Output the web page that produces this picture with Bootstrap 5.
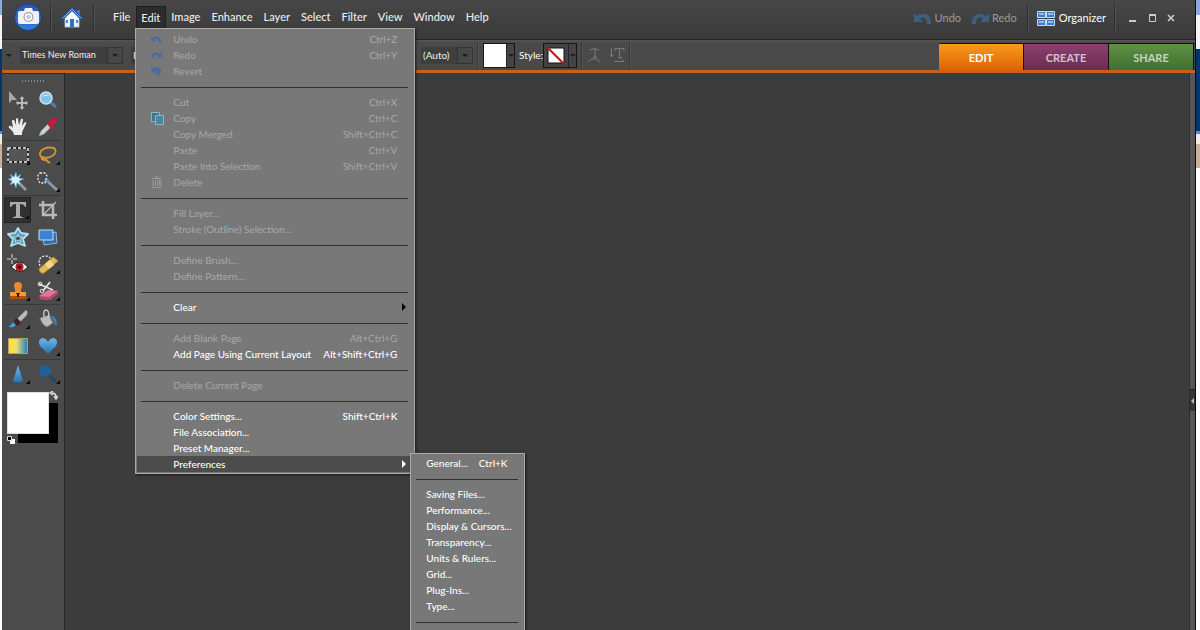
<!DOCTYPE html>
<html lang="en">
<head>
<meta charset="utf-8">
<meta name="viewport" content="width=device-width, initial-scale=1">
<title>Photo editor</title>
<link href="https://cdn.jsdelivr.net/npm/bootstrap@5.3.0/dist/css/bootstrap.min.css" rel="stylesheet">
<style>
  body {
    font-family: Lato, "Open Sans", sans-serif;
    font-size: 11px; line-height: 16px; color: #e6e6e6;
    background: linear-gradient(#8da9e0 0 15px, #f4f4f4 15px 49px, #003670 49px 131px, #5d86e8 131px 134px, #f3ece3 134px 144px, #c9b19c 144px 168px, #fff 168px);
  }
  button, select { font: inherit; color: inherit; border: 0; padding: 0; background: none; }
  svg { display: block; flex: none; }
  .app { margin: 0 4px 0 2px; border-right: 1px solid #0c0c0c; background: #3c3c3c; }

  .topbar { height: 40px; background: linear-gradient(#474747, #3a3a3a); border-bottom: 1px solid #262626; }
  .topbar .vline { width: 2px; height: 28px; background: #303030; border-right: 1px solid #505050; }
  .mainmenu { padding: 6px 0 0 13px; }
  .menu-btn { padding: 0 6px 0 5px; height: 22px; font-size: 11px; font-weight: 500; color: #ececec; }
  .menu-btn.active { background: #2c2c2c; border: 1px solid #1f1f1f; border-bottom: 0; padding: 0 5px 0 4px; }
  .brand-icon { width: 48px; padding-left: 11px; }
  .home-icon { width: 41px; padding-left: 9px; }
  .hist-btn { color: #9c9c9c; gap: 3px; margin-right: 10px; }
  .win-btns { margin: 0 17px 0 10px; gap: 5px; }

  .optbar { height: 30px; background: linear-gradient(#555, #4a4a4a 3px, #484848); font-size: 10px; }
  .optbar .vline { width: 2px; height: 26px; background: #383838; border-right: 1px solid #555; }
  .field select { appearance: none; background: #3e3e3e; height: 17px; padding-left: 2px; color: #f0f0f0; border-radius: 0; }
  .drop { width: 16px; height: 17px; background: #474747; border: 1px solid #333; display: flex; align-items: center; justify-content: center; }
  .caret { width: 0; height: 0; border: 3px solid transparent; border-top-color: #1d1d1d; border-bottom: 0; }
  .pick { height: 25px; border: 1px solid #161616; background: #444; }
  .pick .side { width: 8px; height: 23px; display: flex; align-items: center; justify-content: center; }
  .field .font-select { width: 87px; font-size: 9px; }
  .style-select { width: 250px; }
  .leading-select { width: 36px; }

  .mode { height: 27px; width: 85px; border: 1px solid #111; border-bottom: 0; border-left: 0; font-size: 11px; font-weight: 700; padding-top: 2px; color: #d2c2cc; }
  .mode-edit { background: linear-gradient(#f99a1c, #df6204); color: #fff; }
  .mode-create { background: linear-gradient(#8b416f, #6d2a54); }
  .mode-share { background: linear-gradient(#5f9146, #41702f); color: #c5d3bf; margin-right: 1px; }
  .orange { height: 3px; background: #c9611a; }

  .work { min-height: calc(100vh - 73px); }
  .toolbox { width: 63px; background: #4b4b4b; border-right: 1px solid #262626; border-top: 1px solid #2d2d2d; padding: 0 3px 0 2px; }
  .grip { height: 11px; display: flex; justify-content: center; gap: 2px; padding-top: 6px; }
  .grip i { width: 1px; height: 2px; background: #8b8b8b; }
  .toolset { display: grid; grid-template-columns: 27px 27px; column-gap: 3px; row-gap: 1px; border-top: 1px solid #393939; padding-top: 1px; justify-content: center; }
  .toolset.first { border-top-color: transparent; }
  .tool { width: 27px; height: 26px; display: flex; align-items: center; justify-content: center; position: relative; }
  .tool.on { background: #303030; border: 1px solid #252525; }
  .tool.more::after { content: ""; position: absolute; right: 1px; bottom: 3px; border: 2px solid transparent; border-right-color: #080808; border-bottom-color: #080808; }
  .swatches { height: 54px; margin: 4px 2px 0 3px; position: relative; }
  .swatches .fore { position: absolute; left: 0; top: 1px; width: 42px; height: 42px; background: #fff; border: 1px solid #ddd; z-index: 1; }
  .swatches .back { position: absolute; left: 11px; top: 12px; width: 40px; height: 40px; background: #000; }
  .swatches .swap { position: absolute; right: 1px; top: 0; }
  .swatches .reset { position: absolute; left: 0; bottom: 1px; z-index: 2; }

  .dock { width: 6px; background: #565656; border-left: 1px solid #2d2d2d; padding-top: 316px; }
  .dock button { display: flex; align-items: center; width: 5px; height: 22px; background: #353535; border-top: 1px solid #222; }

  .menu-panel { position: absolute; background: #787878; border: 1px solid #adada0; box-shadow: 1px 1px 2px #161616; color: #fff; z-index: 5; }
  .menu-edit { top: 22px; left: -1px; width: 280px; padding: 2px 1px 1px; }
  .menu-prefs { left: 274px; top: 424px; width: 115px; padding: 1px 1px 8px; z-index: 6; }
  .menu-panel button { display: flex; align-items: center; width: 100%; height: 16px; text-align: left; white-space: nowrap; font-size: 10px; font-weight: 500; }
  .menu-edit button { padding-right: 16px; }
  .menu-edit .glyph { width: 36px; padding-left: 14px; flex: none; }
  .menu-edit button.sub { padding-right: 7px; }
  .menu-panel button:disabled { color: #a8a8a8; font-weight: 400; }
  .menu-panel button.lit { background: #4c4c4c; }
  .menu-panel hr { margin: 8px 5px 6px 4px; border: 0; height: 1px; background: #303030; opacity: 1; }
  .menu-edit .menu-prefs button { padding: 0 0 0 14px; }
  .key-near { padding-left: 11px; }
</style>
<script src="https://cdn.jsdelivr.net/npm/bootstrap@5.3.0/dist/js/bootstrap.bundle.min.js"></script>
</head>
<body class="vh-100 overflow-hidden">
<svg width="0" height="0" class="position-absolute" aria-hidden="true">
  <defs>
    <linearGradient id="gBlue" x1="0" y1="0" x2="0" y2="1"><stop offset="0" stop-color="#6fb7e6"/><stop offset="1" stop-color="#2474b4"/></linearGradient>
    <linearGradient id="gLogo" x1="0" y1="0" x2="0" y2="1"><stop offset="0" stop-color="#2457a8"/><stop offset="1" stop-color="#2f7de0"/></linearGradient>
    <linearGradient id="gGrad" x1="0" y1="0" x2="1" y2="0"><stop offset="0" stop-color="#ffe11f"/><stop offset=".4" stop-color="#f0e070"/><stop offset="1" stop-color="#1f7fc0"/></linearGradient>
    <symbol id="undo" viewBox="0 0 18 12"><path d="M0 1v9h9L6 7c4-3 7-1 7 5h4C18 3 10-1 3 4z"/></symbol>
    <symbol id="redo" viewBox="0 0 18 12"><path d="M18 1v9H9l3-3c-4-3-7-1-7 5H1C0 3 8-1 15 4z"/></symbol>
  </defs>
</svg>

<div class="app min-vh-100">
  <header class="topbar d-flex align-items-start">
    <div class="d-flex align-items-center pt-1">
      <div class="brand-icon"><svg width="30" height="28" viewBox="0 0 30 28"><circle cx="15" cy="13" r="13.500" fill="url(#gLogo)" stroke="#1d3d73"/><path d="M7 7h4l1-3h7l1 3h4q2 0 2 2v9q0 2-2 2H7q-2 0-2-2V9q0-2 2-2z" fill="#f1f1f1"/><circle cx="15.500" cy="13" r="5" fill="#9aa5b3"/><circle cx="15.500" cy="13" r="3.800" fill="#fff"/><circle cx="15.500" cy="13" r="2.300" fill="#c3c9d1"/></svg></div>
      <div class="vline"></div>
      <div class="home-icon"><svg width="22" height="20" viewBox="0 0 22 20"><path d="M4 10v9h14v-9l-7-7z" fill="#f4f7fb" stroke="#9fb8dc"/><path d="M16 2h3v6l-3-3z" fill="#3878c8"/><path d="M1 11 11 1l10 10" fill="none" stroke="#1e5db4" stroke-width="2.600"/><path d="M2 10 11 1l9 9" fill="none" stroke="#9cc6f6" stroke-width=".8"/><path d="M9 19v-8h4v8z" fill="#2f6fc4"/><path d="M5 12h2v3H5zm10 0h2v3h-2z" fill="#4c8bd8"/></svg></div>
      <div class="vline"></div>
    </div>
    <nav class="mainmenu d-flex" aria-label="Main menu">
      <button class="menu-btn">File</button>
      <div class="position-relative">
        <button class="menu-btn active">Edit</button>
        <div class="menu-panel menu-edit">
          <button disabled><span class="glyph"><svg width="11" height="8" fill="#4a6d9c"><use href="#undo"/></svg></span>Undo<span class="ms-auto">Ctrl+Z</span></button>
          <button disabled><span class="glyph"><svg width="11" height="8" fill="#4a6d9c"><use href="#redo"/></svg></span>Redo<span class="ms-auto">Ctrl+Y</span></button>
          <button disabled><span class="glyph"><svg width="11" height="11" viewBox="0 0 11 11"><path d="M0 5V0l2 2c4-3 9 0 8 4q-1 4-5 5c3-3 2-5-1-5l1 3z" fill="#4a6d9c"/></svg></span>Revert</button>
          <hr>
          <button disabled><span class="glyph"></span>Cut<span class="ms-auto">Ctrl+X</span></button>
          <button disabled><span class="glyph"><svg width="13" height="13" viewBox="0 0 13 13"><path d="M.5.500h8v9h-8z" fill="#3d7690" stroke="#8fb4c4"/><path d="M4.500 3.500h8v9h-8z" fill="#4487a6" stroke="#8fb4c4"/></svg></span>Copy<span class="ms-auto">Ctrl+C</span></button>
          <button disabled><span class="glyph"></span>Copy Merged<span class="ms-auto">Shift+Ctrl+C</span></button>
          <button disabled><span class="glyph"></span>Paste<span class="ms-auto">Ctrl+V</span></button>
          <button disabled><span class="glyph"></span>Paste Into Selection<span class="ms-auto">Shift+Ctrl+V</span></button>
          <button disabled><span class="glyph"><svg width="12" height="12" viewBox="0 0 12 12"><path d="M1 2.500h10M4 1h4M2 4v7.500h8V4M4.500 4v6M6.500 4v6M8.500 4v6" fill="none" stroke="#999"/></svg></span>Delete</button>
          <hr>
          <button disabled><span class="glyph"></span>Fill Layer...</button>
          <button disabled><span class="glyph"></span>Stroke (Outline) Selection...</button>
          <hr>
          <button disabled><span class="glyph"></span>Define Brush...</button>
          <button disabled><span class="glyph"></span>Define Pattern...</button>
          <hr>
          <button class="sub"><span class="glyph"></span>Clear<svg class="ms-auto" width="4" height="8" viewBox="0 0 4 8"><path d="M0 0l4 4-4 4z" fill="#000"/></svg></button>
          <hr>
          <button disabled><span class="glyph"></span>Add Blank Page<span class="ms-auto">Alt+Ctrl+G</span></button>
          <button><span class="glyph"></span>Add Page Using Current Layout<span class="ms-auto">Alt+Shift+Ctrl+G</span></button>
          <hr>
          <button disabled><span class="glyph"></span>Delete Current Page</button>
          <hr>
          <button><span class="glyph"></span>Color Settings...<span class="ms-auto">Shift+Ctrl+K</span></button>
          <button><span class="glyph"></span>File Association...</button>
          <button><span class="glyph"></span>Preset Manager...</button>
          <button class="sub lit"><span class="glyph"></span>Preferences<svg class="ms-auto" width="4" height="8" viewBox="0 0 4 8"><path d="M0 0l4 4-4 4z" fill="#fff"/></svg></button>
          <div class="menu-panel menu-prefs">
            <button>General...<span class="key-near">Ctrl+K</span></button>
            <hr>
            <button>Saving Files...</button>
            <button>Performance...</button>
            <button>Display &amp; Cursors...</button>
            <button>Transparency...</button>
            <button>Units &amp; Rulers...</button>
            <button>Grid...</button>
            <button>Plug-Ins...</button>
            <button>Type...</button>
            <hr>
          </div>
        </div>
      </div>
      <button class="menu-btn">Image</button>
      <button class="menu-btn">Enhance</button>
      <button class="menu-btn">Layer</button>
      <button class="menu-btn">Select</button>
      <button class="menu-btn">Filter</button>
      <button class="menu-btn">View</button>
      <button class="menu-btn">Window</button>
      <button class="menu-btn">Help</button>
    </nav>
    <div class="ms-auto d-flex align-items-center pt-1">
      <button class="hist-btn d-flex align-items-center"><svg width="18" height="12" fill="#3f5d7c"><use href="#undo"/></svg>Undo</button>
      <button class="hist-btn d-flex align-items-center"><svg width="18" height="12" fill="#3f5d7c"><use href="#redo"/></svg>Redo</button>
      <div class="vline"></div>
      <button class="d-flex align-items-center gap-1 ms-2 me-2 text-white"><svg width="18" height="15" viewBox="0 0 18 15"><path d="M.5.500h8v6h-8zm9 0h8v6h-8zm-9 8h8v6h-8zm9 0h8v6h-8z" fill="#3f7cc8" stroke="#c9def6"/><path d="M2 2h5v2H2zm9 0h5v2h-5zm-9 8h5v2H2zm9 0h5v2h-5z" fill="#8cbcf4"/></svg>Organizer</button>
      <div class="vline"></div>
      <div class="win-btns d-flex align-items-center">
        <button aria-label="Minimize"><svg width="14" height="12" viewBox="0 0 14 12"><path d="M3 9h7" stroke="#ccc" stroke-width="2"/></svg></button>
        <button aria-label="Maximize"><svg width="14" height="12" viewBox="0 0 14 12"><path d="M4.500 3v6.500h6V3" fill="none" stroke="#ccc"/><path d="M4 3h7" stroke="#ccc" stroke-width="2"/></svg></button>
        <button aria-label="Close"><svg width="14" height="12" viewBox="0 0 14 12"><path d="M4 3l6 6m0-6-6 6" stroke="#ccc" stroke-width="1.600"/></svg></button>
      </div>
    </div>
  </header>

  <div class="optbar d-flex align-items-center">
    <span class="caret ms-1 me-2"></span>
    <div class="field d-flex">
      <select class="font-select" aria-label="Font family"><option>Times New Roman</option></select>
      <button class="drop me-2" aria-label="Font list"><span class="caret"></span></button>
    </div>
    <div class="field d-flex">
      <select class="style-select" aria-label="Font style"><option>Regular</option></select>
      <button class="drop me-4" aria-label="Style list"><span class="caret"></span></button>
    </div>
    <div class="field d-flex">
      <select class="leading-select" aria-label="Leading"><option>(Auto)</option></select>
      <button class="drop me-1" aria-label="Leading list"><span class="caret"></span></button>
    </div>
    <div class="vline me-1"></div>
    <button class="pick d-flex" aria-label="Text color"><svg width="22" height="23"><path d="M0 0h22v23H0z" fill="#fff"/></svg><span class="side border-start border-dark"><span class="caret"></span></span></button>
    <span class="ps-1 text-white">Style:</span>
    <button class="pick d-flex" aria-label="Layer style"><svg width="24" height="23" viewBox="0 0 24 23"><path d="M4 4h16v15H4z" fill="#fff" stroke="#111"/><path d="M3 3l17 17" stroke="#c4141c" stroke-width="2"/></svg><span class="side border-start border-dark"><span class="caret"></span></span></button>
    <div class="vline ms-1 me-1"></div>
    <button class="me-2" aria-label="Warp text"><svg width="14" height="16" viewBox="0 0 14 16" fill="none" stroke="#7b7b7b"><path d="M3 3q4-3 9 0M8 2v8M6 10h4M1 15q6-7 12 0"/></svg></button>
    <button class="me-1" aria-label="Text orientation"><svg width="16" height="16" viewBox="0 0 16 16" fill="none" stroke="#7b7b7b"><path d="M2.500 1v9M1 8l1.500 2L4 8M6 4V1.500h9V4M10.500 2v9M9 11h4M5 14.500h10M13 13l2 1.500"/></svg></button>
    <div class="vline"></div>
    <div class="d-flex ms-auto align-self-end">
      <button class="mode mode-edit">EDIT</button>
      <button class="mode mode-create">CREATE</button>
      <button class="mode mode-share">SHARE</button>
    </div>
  </div>
  <div class="orange"></div>

  <main class="work d-flex">
    <aside class="toolbox" aria-label="Tools">
      <div class="grip"><i></i><i></i><i></i><i></i><i></i><i></i><i></i><i></i></div>
      <div class="toolset first">
        <button class="tool" aria-label="Move"><svg width="20" height="20" viewBox="0 0 20 20"><path d="M1 1v12l3-3h5z" fill="#a7a7a7"/><path d="M14 6l2.500 3H15v3h3v-1.500l2 2.500-2 2.500V14h-3v3h1.500L14 20l-2.500-3H13v-3h-3v1.500L8 13l2-2.500V12h3V9h-1.500z" fill="#b8b8b8"/></svg></button>
        <button class="tool" aria-label="Zoom"><svg width="20" height="20" viewBox="0 0 20 20"><path d="M12 12l6 5" stroke="#4c7fae" stroke-width="3"/><circle cx="8" cy="8" r="6" fill="#7fc4ec" stroke="#d2e2ec" stroke-width="1.500"/><path d="M4 7q3-4 8-1-4-1-8 1z" fill="#d8f1ff"/></svg></button>
        <button class="tool" aria-label="Hand"><svg width="20" height="20" viewBox="0 0 20 20"><path d="M6 18q0-3-4-6-2-2-1-3 2-1 4 2L4 4q0-2 2-1l2 5V2q1-2 2 0l1 6 2-6q2-1 2 1l-1 6 3-4q2 0 1 2l-4 8v3z" fill="#ececec"/></svg></button>
        <button class="tool" aria-label="Eyedropper"><svg width="20" height="20" viewBox="0 0 20 20"><path d="M1 19l2-5 7-7 3 3-7 7z" fill="#c6d2d8" stroke="#8c979c" stroke-width=".6"/><path d="M9 6l2-1 3-4q4-1 5 2 0 3-4 5l-1 4-1 1z" fill="#c41c3c"/></svg></button>
      </div>
      <div class="toolset">
        <button class="tool more" aria-label="Marquee"><svg width="22" height="16" viewBox="0 0 22 16"><path d="M1 1h20v14H1z" fill="#555" stroke="#111" stroke-width="1.500"/><path d="M1 1h20v14H1z" fill="none" stroke="#f0f0f0" stroke-width="1.500" stroke-dasharray="3 2"/></svg></button>
        <button class="tool more" aria-label="Lasso"><svg width="20" height="18" viewBox="0 0 20 18"><path d="M6 13Q0 10 3 5q5-5 13-3 4 4-2 8-5 3-9 1-2 0-1 2 3 2 5 0M8 12q0 3 4 5" fill="none" stroke="#cf9637" stroke-width="1.900"/></svg></button>
        <button class="tool" aria-label="Magic wand"><svg width="20" height="20" viewBox="0 0 20 20"><path d="M9 9l9 9" stroke="#8f9aa0" stroke-width="3"/><path d="M8 0l1 5 4-3-2 4 5 1-5 2 2 4-4-2-1 5-2-5-4 2 2-4-4-2 4-1-2-4 4 3z" fill="#d7f2ff" stroke="#3e9bd0" stroke-width=".6"/></svg></button>
        <button class="tool more" aria-label="Selection brush"><svg width="22" height="20" viewBox="0 0 22 20"><path d="M9 8l11 10" stroke="#8d979c" stroke-width="3"/><path d="M8 7l4 3" stroke="#4a8fe0" stroke-width="3"/><path d="M3 1h5l2 3-2 7H3L1 8V3z" fill="none" stroke="#eee" stroke-width="1.300" stroke-dasharray="2 1.500"/></svg></button>
      </div>
      <div class="toolset">
        <button class="tool on more" aria-label="Type"><svg width="18" height="18" viewBox="0 0 18 18"><path d="M1 1h16v5h-1q-1-3-5-3v11q0 2 3 2v1H4v-1q3 0 3-2V3Q3 3 2 6H1z" fill="#ababab"/></svg></button>
        <button class="tool" aria-label="Crop"><svg width="20" height="20" viewBox="0 0 20 20" fill="none" stroke="#b9b9b9" stroke-width="2.500"><path d="M5 1v14h14M1 5h14v14"/><path d="M6 14L18 2" stroke-width="1.200"/></svg></button>
        <button class="tool" aria-label="Cookie cutter"><svg width="22" height="20" viewBox="0 0 22 20"><path d="M11 1l3 5 7 1-5 5 2 7-7-3-7 3 2-7-5-5 7-1z" fill="#5c9cb8" stroke="#b5dfee" stroke-width="1.800" stroke-linejoin="round"/><path d="M11 7l1 3h4l-3 2 1 3-3-2-3 2 1-3-3-2h4z" fill="#404b50" stroke="#a7dcee"/></svg></button>
        <button class="tool" aria-label="Straighten"><svg width="20" height="18" viewBox="0 0 20 18"><path d="M5 7l13-3 1 11-13 2z" fill="#376ba8" stroke="#8fb6dd"/><path d="M1 2h14v10H1z" fill="#3c82d4" stroke="#c3def6"/></svg></button>
        <button class="tool" aria-label="Red eye"><svg width="22" height="20" viewBox="0 0 22 20"><path d="M5 0v10M0 5h10" stroke="#ddd" stroke-dasharray="4 2"/><path d="M4 13q8-10 17 0-8 9-17 0z" fill="#f1f1f1" stroke="#111"/><circle cx="12.500" cy="13" r="4" fill="#bd1022"/><circle cx="12.500" cy="13" r="1.500"/></svg></button>
        <button class="tool more" aria-label="Healing brush"><svg width="22" height="20" viewBox="0 0 22 20"><path d="M3 12Q0 3 8 2q5 0 6 4" fill="none" stroke="#eee" stroke-width="1.300" stroke-dasharray="2 1.500"/><path d="M2 15L16 3l5 4L7 19q-4 1-5-4z" fill="#e4b959" stroke="#b98a2a"/><path d="M8 10l5-4 4 5-5 4z" fill="#f4d78c"/></svg></button>
        <button class="tool more" aria-label="Clone stamp"><svg width="20" height="20" viewBox="0 0 20 20"><path d="M7 9Q4 1 10 1t3 8v2H7z" fill="#e98a2c"/><path d="M2 11h16v4H2z" fill="#f09b37"/><path d="M2 15h16v3H2z" fill="#b04e0c"/><path d="M8 12h4v1h-1v3H9v-3H8z" fill="#3a1a04"/></svg></button>
        <button class="tool more" aria-label="Eraser"><svg width="22" height="20" viewBox="0 0 22 20"><path d="M2 15l9-6 10 1-8 7-8 1z" fill="#e07895"/><path d="M2 15l10 1 9-6v3l-8 6H4z" fill="#b8456a"/><path d="M2 3l14 6M6 10L13 1" stroke="#e6e6e6" stroke-width="1.600"/><circle cx="3" cy="3" r="1.800" fill="none" stroke="#e6e6e6"/><circle cx="5" cy="10" r="1.800" fill="none" stroke="#e6e6e6"/></svg></button>
      </div>
      <div class="toolset">
        <button class="tool more" aria-label="Brush"><svg width="22" height="20" viewBox="0 0 22 20"><path d="M10 10L19 1q3 2 0 6l-6 6z" fill="#b9b9b9"/><path d="M7 11l3-2 4 4-2 3q-4 2-6-1z" fill="#40232a"/><path d="M1 17q3 0 5-4l3 3q-3 4-8 1z" fill="#4a9ed0"/></svg></button>
        <button class="tool" aria-label="Paint bucket"><svg width="20" height="20" viewBox="0 0 20 20"><path d="M2 9l9-3 4 8-6 4q-5-2-7-9z" fill="#bcbcbc" stroke="#777"/><path d="M6 8Q5 1 8 1t3 7" fill="none" stroke="#ccc" stroke-width="1.300"/><path d="M12 7q7-1 7 9-3 1-3-3-1-3-4-6z" fill="#2f86be"/></svg></button>
        <button class="tool" aria-label="Gradient"><svg width="20" height="16" viewBox="0 0 20 16"><path d="M.5.500h19v15H.5z" fill="url(#gGrad)" stroke="#b0a26a"/></svg></button>
        <button class="tool more" aria-label="Shape"><svg width="20" height="18" viewBox="0 0 20 18"><path d="M10 17L2 9Q-1 3 4 1q4 0 6 4 2-4 6-4 5 2 2 8z" fill="url(#gBlue)"/></svg></button>
      </div>
      <div class="toolset">
        <button class="tool more" aria-label="Sharpen"><svg width="14" height="18" viewBox="0 0 14 18"><path d="M7 0l5 16q-5 3-10 0z" fill="url(#gBlue)"/></svg></button>
        <button class="tool more" aria-label="Dodge"><svg width="20" height="20" viewBox="0 0 20 20"><path d="M11 11l7 7" stroke="#174b74" stroke-width="2.500"/><circle cx="7" cy="7" r="6" fill="#1f6196"/></svg></button>
      </div>
      <div class="swatches">
        <button class="fore" aria-label="Foreground color"></button>
        <button class="back" aria-label="Background color"></button>
        <button class="swap" aria-label="Swap colors"><svg width="9" height="9" viewBox="0 0 9 9"><path d="M3 2q4 0 4 4M4 0L1 2l3 2M5 5l2 3 2-3" fill="none" stroke="#ddd" stroke-width="1.500"/></svg></button>
        <button class="reset" aria-label="Default colors"><svg width="8" height="8" viewBox="0 0 8 8"><path d="M3 3h5v5H3z" fill="#fff"/><path d="M.5.500h4v4h-4z" fill="#000" stroke="#ddd"/></svg></button>
      </div>
    </aside>
    <div class="flex-grow-1"></div>
    <aside class="dock"><button aria-label="Expand panel"><svg width="4" height="6" viewBox="0 0 4 6"><path d="M4 0v6L1 3z" fill="#bbb"/></svg></button></aside>
  </main>
</div>
</body>
</html>
